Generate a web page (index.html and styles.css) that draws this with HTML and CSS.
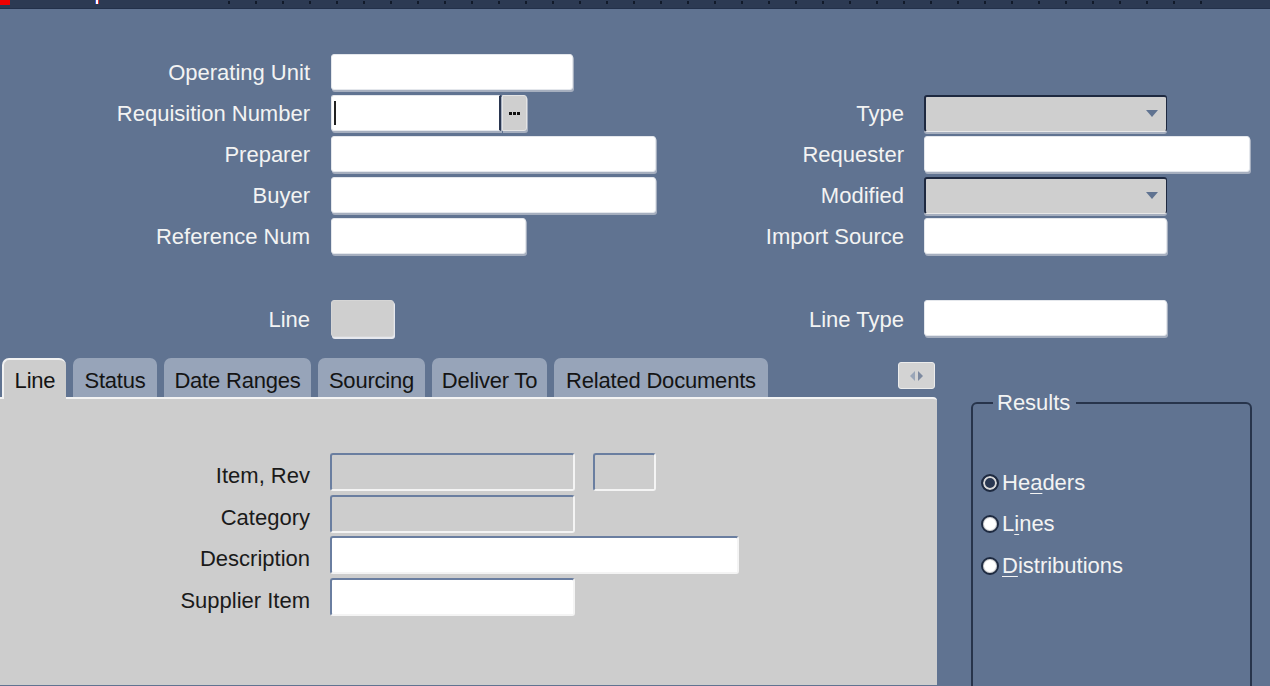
FILE: index.html
```html
<!DOCTYPE html>
<html>
<head>
<meta charset="utf-8">
<link rel="stylesheet" href="styles.css">
</head>
<body>
<div class="topbar"><span class="red"></span><span class="flag"></span></div>
<div class="header-form">
  <label class="lbl">Operating Unit</label><div class="cell"><span class="inp w242"></span></div><span></span><span></span>

  <label class="lbl">Requisition Number</label>
  <div class="cell"><span class="inp focus w170"><span class="caret"></span></span><span class="lov"><i></i><i></i><i></i></span></div>
  <label class="lbl r">Type</label><div class="cell"><span class="sel w243"><span class="arrow"></span></span></div>

  <label class="lbl">Preparer</label><div class="cell"><span class="inp w325"></span></div>
  <label class="lbl r">Requester</label><div class="cell"><span class="inp w326"></span></div>

  <label class="lbl">Buyer</label><div class="cell"><span class="inp w325"></span></div>
  <label class="lbl r">Modified</label><div class="cell"><span class="sel w243"><span class="arrow"></span></span></div>

  <label class="lbl">Reference Num</label><div class="cell"><span class="inp w195"></span></div>
  <label class="lbl r">Import Source</label><div class="cell"><span class="inp w243"></span></div>

  <span></span><span></span><span></span><span></span>

  <label class="lbl line-lbl">Line</label><div class="cell"><span class="box w63"></span></div>
  <label class="lbl r line-lbl">Line Type</label><div class="cell"><span class="inp w243"></span></div>
</div>

<div class="lower">
  <div class="tabarea">
    <div class="tabs">
      <span class="tab active t1">Line</span>
      <span class="tab t2">Status</span>
      <span class="tab t3">Date Ranges</span>
      <span class="tab t4">Sourcing</span>
      <span class="tab t5">Deliver To</span>
      <span class="tab t6">Related Documents</span>
      <span class="scroll"><span class="tl"></span><span class="tr"></span></span>
    </div>
    <div class="panel">
      <label class="plbl">Item, Rev</label><div class="cell"><span class="pin gray w245"></span><span class="pin gray w63 rev"></span></div>
      <label class="plbl">Category</label><div class="cell"><span class="pin gray w245"></span></div>
      <label class="plbl">Description</label><div class="cell"><span class="pin white w409"></span></div>
      <label class="plbl">Supplier Item</label><div class="cell"><span class="pin white w245"></span></div>
    </div>
  </div>
  <fieldset class="results">
    <legend>Results</legend>
    <div class="radio"><span class="dot on"></span><span>He<u>a</u>ders</span></div>
    <div class="radio"><span class="dot"></span><span>L<u>i</u>nes</span></div>
    <div class="radio"><span class="dot"></span><span><u>D</u>istributions</span></div>
  </fieldset>
</div>
</body>
</html>
```

FILE: styles.css
```css
html, body {
  margin: 0;
  padding: 0;
  height: 100%;
  overflow: hidden;
}
body {
  background: #607391;
  font-family: "Liberation Sans", Arial, sans-serif;
  font-size: 22px;
  color: #f3f3f3;
}
.topbar {
  height: 8px;
  background-color: #2c3a53;
  background-image: repeating-linear-gradient(90deg, transparent 0, transparent 25px, #111a2a 25px, #111a2a 27px);
  background-size: 1010px 3px;
  background-position: 203px 1px;
  background-repeat: no-repeat;
  display: flex;
  align-items: flex-start;
  border-bottom: 1px solid #22304a;
}
.red { width: 10px; height: 5px; background: #f00000; }
.flag {
  width: 4px; height: 4px; margin-left: 85px;
  background: linear-gradient(90deg, #3b5bd0 0 33%, #ffffff 33% 66%, #e03030 66%);
}
.header-form {
  display: grid;
  grid-template-columns: 331px 409px 184px 1fr;
  grid-auto-rows: 41px;
  padding-top: 45px;
  align-items: start;
}
.lbl {
  text-align: right;
  padding-right: 21px;
  line-height: 38px;
  white-space: nowrap;
}
.lbl.r { padding-right: 20px; }
.lbl.line-lbl { line-height: 40px; }
.cell { display: flex; align-items: flex-start; }
.inp {
  display: block;
  box-sizing: border-box;
  height: 36px;
  background: #fff;
  border: 1px solid #e4e7ec;
  border-radius: 3px;
  box-shadow: 1px 2px 0 #a6afbf;
  position: relative;
}
.inp.focus {
  border-right: 2px solid #2a3650;
  border-radius: 3px 0 0 3px;
}
.caret {
  position: absolute;
  left: 2px; top: 5px;
  width: 2px; height: 24px;
  background: #222;
}
.lov {
  display: flex;
  align-items: center;
  justify-content: center;
  gap: 1px;
  box-sizing: border-box;
  width: 25px;
  height: 36px;
  margin-left: 1px;
  background: #cfcfcf;
  border: 1px solid #e4e4e4;
  border-radius: 0 3px 3px 0;
  box-shadow: 1px 2px 0 #a6afbf;
}
.lov i {
  display: block;
  width: 3px;
  height: 3px;
  background: #111;
}
.sel {
  display: block;
  box-sizing: border-box;
  height: 37px;
  background: #cfcfcf;
  border-top: 2px solid #1e2940;
  border-left: 2px solid #1e2940;
  border-right: 1px solid #1e2940;
  border-bottom: 1px solid #e8e8e8;
  border-radius: 3px;
  box-shadow: 0 2px 0 #a6afbf;
  position: relative;
}
.arrow {
  position: absolute;
  right: 8px; top: 13px;
  width: 0; height: 0;
  border-left: 6px solid transparent;
  border-right: 6px solid transparent;
  border-top: 7px solid #607391;
}
.box {
  display: block;
  box-sizing: border-box;
  height: 37px;
  background: #cfcfcf;
  border: 1px solid #d6d6d6;
  border-radius: 3px;
  box-shadow: 1px 2px 0 #e6e8ee;
}
.w242 { width: 242px; }
.w170 { width: 170px; }
.w243 { width: 243px; }
.w325 { width: 325px; }
.w326 { width: 326px; }
.w195 { width: 195px; }
.w63 { width: 63px; }
.w245 { width: 245px; }
.w409 { width: 409px; }

.lower {
  display: flex;
  align-items: flex-start;
  margin-top: 17px;
}
.tabarea {
  width: 937px;
  display: flex;
  flex-direction: column;
}
.tabs {
  display: flex;
  align-items: flex-start;
  gap: 7px;
  padding-left: 2px;
  height: 39px;
  position: relative;
  z-index: 1;
}
.tab {
  box-sizing: border-box;
  height: 39px;
  line-height: 45px;
  text-align: center;
  background: #97a4b9;
  color: #141414;
  border-radius: 7px 7px 0 0;
  white-space: nowrap;
  letter-spacing: -0.2px;
}
.t1 { width: 64px; }
.t2 { width: 84px; }
.t3 { width: 147px; }
.t4 { width: 107px; }
.t5 { width: 115px; }
.t6 { width: 214px; }
.tab.active {
  height: 41px;
  background: #cdcdcd;
  border-top: 2px solid #f2f2f2;
  border-left: 2px solid #f2f2f2;
  line-height: 41px;
}
.scroll {
  margin-left: auto;
  margin-right: 2px;
  margin-top: 4px;
  width: 37px;
  height: 27px;
  box-sizing: border-box;
  background: #d3d3d3;
  border: 1px solid #ececec;
  border-radius: 3px;
  display: flex;
  align-items: center;
  justify-content: center;
  gap: 3px;
}
.tl, .tr { width: 0; height: 0; border-top: 5px solid transparent; border-bottom: 5px solid transparent; }
.tl { border-right: 5px solid #9aa6b8; }
.tr { border-left: 5px solid #7d8aa0; }
.panel {
  height: 288px;
  box-sizing: border-box;
  background: #cdcdcd;
  border-top: 2px solid #f3f3f3;
  border-radius: 0 4px 0 0;
  padding-top: 54px;
  display: grid;
  grid-template-columns: 330px 1fr;
  grid-auto-rows: 41.5px;
  align-items: start;
}
.plbl {
  text-align: right;
  padding-right: 20px;
  padding-top: 4px;
  line-height: 38px;
  color: #1a1a1a;
  white-space: nowrap;
}
.pin {
  display: block;
  box-sizing: border-box;
  height: 38px;
  border-top: 2px solid #6a7ea0;
  border-left: 2px solid #6a7ea0;
  border-right: 2px solid #f4f4f4;
  border-bottom: 2px solid #f4f4f4;
  border-radius: 3px;
}
.pin.gray { background: #cdcdcd; }
.pin.white { background: #ffffff; }
.pin.rev { margin-left: 18px; }

.results {
  margin: 0 0 0 34px;
  margin-top: 34px;
  width: 281px;
  height: 300px;
  box-sizing: border-box;
  border: 2px solid #27344b;
  border-radius: 6px;
  padding: 48px 0 0 8px;
}
.results legend {
  padding: 0 6px 0 4px;
  margin-left: 12px;
  line-height: 22px;
  color: #f3f3f3;
}
.radio {
  display: flex;
  align-items: center;
  height: 41.5px;
  gap: 3px;
  color: #f3f3f3;
}
.radio u { text-decoration-thickness: 1px; text-underline-offset: 3px; }
.dot {
  width: 18px;
  height: 18px;
  box-sizing: border-box;
  border-radius: 50%;
  background: #ffffff;
  border: 2px solid #1e2a40;
  box-shadow: inset 0 0 0 1px #d0d0d0;
}
.dot.on {
  background: #2a3852;
  box-shadow: inset 0 0 0 2px #d8d8d8;
}
```
